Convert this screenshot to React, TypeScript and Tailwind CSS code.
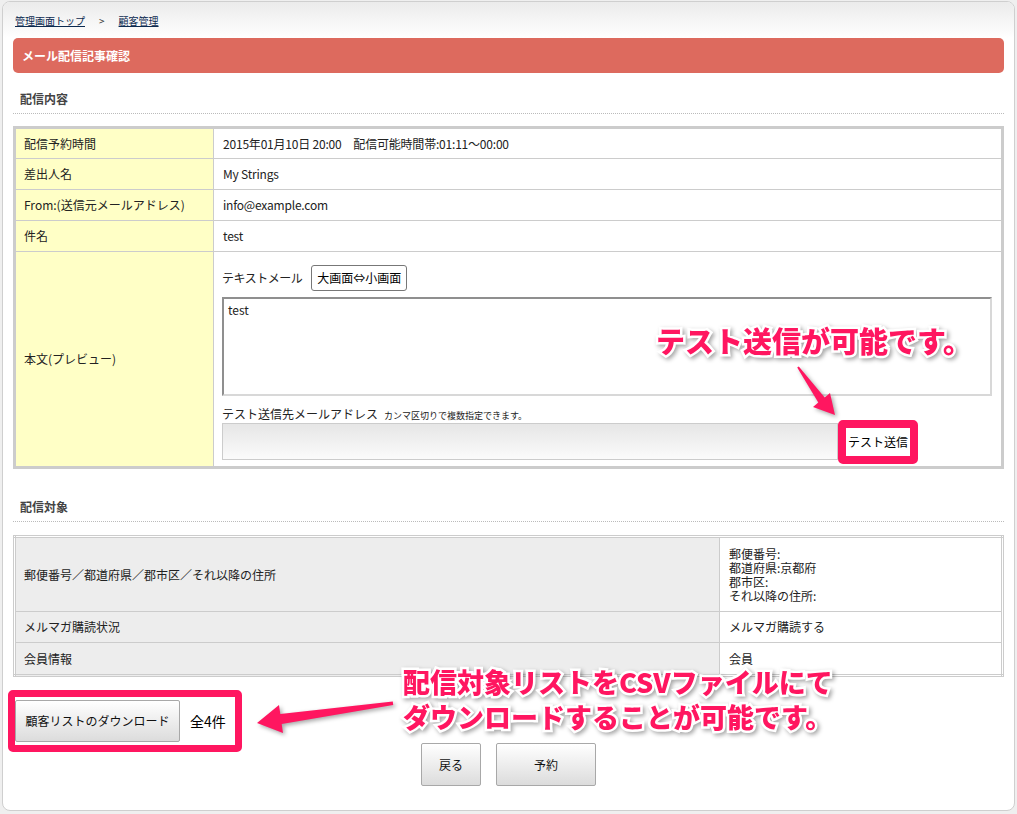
import React from "react";

const rows1 = [
  { label: "配信予約時間", value: "2015年01月10日 20:00\u3000配信可能時間帯:01:11〜00:00" },
  { label: "差出人名", value: "My Strings" },
  { label: "From:(送信元メールアドレス)", value: "info@example.com" },
  { label: "件名", value: "test" },
];

function SectionTitle({ children, top }: { children: React.ReactNode; top: string }) {
  return (
    <div className={`${top} border-b border-dotted border-[#bbb] pb-[6px] pl-[7px] text-[12px] font-bold leading-[16px] text-[#444]`}>
      {children}
    </div>
  );
}

function GreyButton({ children, className }: { children: React.ReactNode; className: string }) {
  return (
    <button
      type="button"
      className={`rounded-[2px] border border-[#a8a8a8] bg-linear-to-b from-white to-[#dcdcdc] text-[12px] text-[#111] ${className}`}
    >
      {children}
    </button>
  );
}

export default function App() {
  return (
    <div className="relative min-h-screen bg-[#efefef] px-[2px] pt-px font-['Noto_Sans_CJK_JP',sans-serif] text-[#222]">
      <div className="overflow-hidden rounded-[8px] border border-[#cfcfcf] bg-white pb-[24px]">
        {/* breadcrumb */}
        <div className="flex h-[36px] items-center gap-[14px] bg-linear-to-b from-[#ebebeb] to-white pl-[12px] text-[10px] text-[#0c2a50]">
          <span className="underline">管理画面トップ</span>
          <span className="text-[#333]">&gt;</span>
          <span className="underline">顧客管理</span>
        </div>

        <div className="px-[10px]">
          <div className="flex h-[35px] items-center rounded-[5px] bg-[#dd6a5e] px-[9px] text-[12px] font-bold text-white">
            メール配信記事確認
          </div>

          <SectionTitle top="pt-[18px]">配信内容</SectionTitle>

          <table className="mt-[12px] w-full border-collapse border-[3px] border-[#cccccc] text-[12px]">
            <tbody>
              {rows1.map((r) => (
                <tr key={r.label} className="h-[31px]">
                  <td className="w-[199px] border border-[#cccccc] bg-[#ffffc6] pl-[8px]">{r.label}</td>
                  <td className="border border-[#cccccc] pl-[9px] tracking-[-0.2px]">{r.value}</td>
                </tr>
              ))}
              <tr className="h-[216px]">
                <td className="border border-[#cccccc] bg-[#ffffc6] pl-[8px]">本文(プレビュー)</td>
                <td className="border border-[#cccccc] pl-[8px] align-top">
                  <div className="mt-[13px] flex items-center">
                    <span className="tracking-[-0.5px]">テキストメール</span>
                    <button
                      type="button"
                      className="ml-[9px] h-[26px] rounded-[3px] border border-[#777] bg-white px-[5px] text-[12px] text-black"
                    >
                      大画面⇔小画面
                    </button>
                  </div>
                  <div className="mt-[6px] h-[99px] w-[770px] border-2 border-[#8f8f8f] border-r-[#d8d8d8] border-b-[#d8d8d8] px-[4px] py-[2px] text-[12px]">
                    test
                  </div>
                  <div className="mt-[11px] flex items-baseline leading-[14px]">
                    <span>テスト送信先メールアドレス</span>
                    <span className="ml-[6px] text-[9px]">カンマ区切りで複数指定できます。</span>
                  </div>
                  <div className="flex items-center">
                    <div className="h-[37px] w-[616px] border border-[#cccccc] bg-linear-to-b from-[#e6e6e6] to-[#fbfbfb]" />
                    <div className="-my-[4px] rounded-[5px] border-[8px] border-[#ff1660]">
                      <div className="flex h-[28px] items-center bg-white px-[2px] text-[12px] text-black">テスト送信</div>
                    </div>
                  </div>
                </td>
              </tr>
            </tbody>
          </table>

          <SectionTitle top="pt-[30px]">配信対象</SectionTitle>

          <table className="mt-[13px] w-full border-collapse border-[3px] border-double border-[#cccccc] text-[12px]">
            <tbody>
              <tr className="h-[75px]">
                <td className="border border-[#cccccc] bg-[#ededed] pl-[8px]">郵便番号／都道府県／郡市区／それ以降の住所</td>
                <td className="w-[283px] border border-[#cccccc] pl-[9px] leading-[14px]">
                  郵便番号:
                  <br />
                  都道府県:京都府
                  <br />
                  郡市区:
                  <br />
                  それ以降の住所:
                </td>
              </tr>
              <tr className="h-[31px]">
                <td className="border border-[#cccccc] bg-[#ededed] pl-[8px]">メルマガ購読状況</td>
                <td className="border border-[#cccccc] pl-[9px]">メルマガ購読する</td>
              </tr>
              <tr className="h-[33px]">
                <td className="border border-[#cccccc] bg-[#ededed] pl-[8px]">会員情報</td>
                <td className="border border-[#cccccc] pl-[9px]">会員</td>
              </tr>
            </tbody>
          </table>

          <div className="relative mt-[23px] flex items-center pl-[2px]">
            <span className="pointer-events-none absolute left-[-5px] top-[-10px] h-[62px] w-[234px] rounded-[5px] border-[7px] border-[#ff1660]" />
            <GreyButton className="h-[42px] w-[165px]">顧客リストのダウンロード</GreyButton>
            <span className="ml-[10px] text-[14px] text-black">全4件</span>
          </div>

          <div className="mt-px flex justify-center gap-[15px]">
            <GreyButton className="h-[43px] w-[60px]">戻る</GreyButton>
            <GreyButton className="h-[43px] w-[100px]">予約</GreyButton>
          </div>
        </div>
      </div>

      {/* annotations */}
      <div className="pointer-events-none absolute left-[656px] top-[326px] whitespace-nowrap text-[29px] font-black leading-none text-[#ff1660] [-webkit-text-stroke:5px_white] [filter:drop-shadow(2px_2px_2px_rgba(0,0,0,0.35))] [paint-order:stroke_fill]">
        テスト送信が可能です。
      </div>
      <svg
        className="pointer-events-none absolute left-[780px] top-[360px] [filter:drop-shadow(2px_2px_2px_rgba(0,0,0,0.35))]"
        width="70"
        height="70"
        viewBox="0 0 70 70"
      >
        <polygon points="17.2,7.6 18.8,6.4 44.7,37.6 50,33 55,55 33,47 38.3,42.4" fill="#ff1660" />
      </svg>

      <div className="pointer-events-none absolute left-[403px] top-[664px] whitespace-nowrap text-[27px] font-black leading-[35px] text-[#ff1660] [-webkit-text-stroke:5px_white] [filter:drop-shadow(2px_2px_2px_rgba(0,0,0,0.35))] [paint-order:stroke_fill]">
        配信対象リストをCSVファイルにて
        <br />
        ダウンロードすることが可能です。
      </div>
      <svg
        className="pointer-events-none absolute left-[250px] top-[695px] [filter:drop-shadow(2px_2px_2px_rgba(0,0,0,0.35))]"
        width="150"
        height="45"
        viewBox="0 0 150 45"
      >
        <polygon points="142.8,6.5 143.2,10 31.7,29 33,38 7,28 29,10 30.3,19" fill="#ff1660" />
      </svg>
    </div>
  );
}
